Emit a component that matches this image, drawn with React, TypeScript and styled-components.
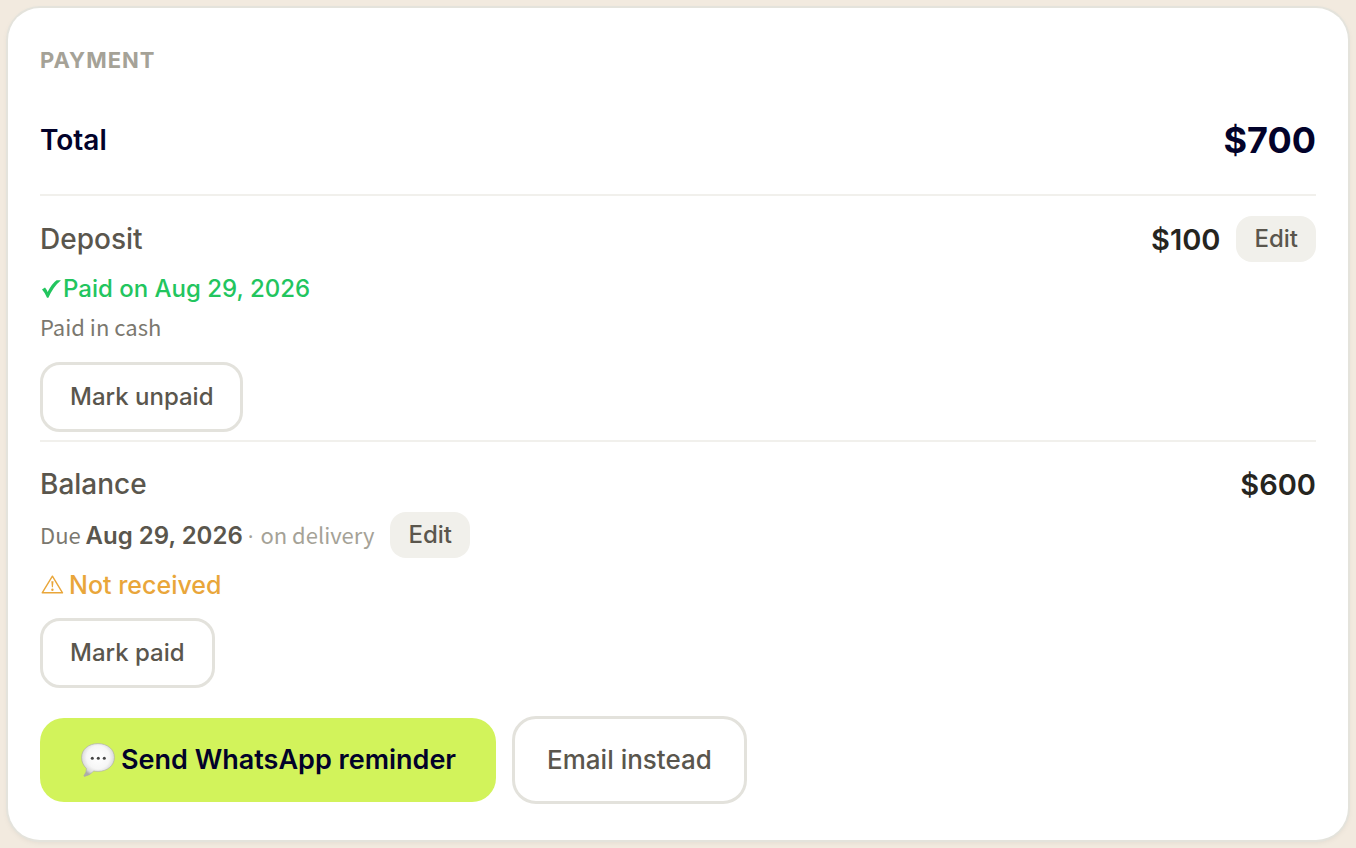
import React from "react";
import styled, { createGlobalStyle } from "styled-components";

const GlobalStyle = createGlobalStyle`
  *, *::before, *::after { box-sizing: border-box; }
  body {
    margin: 0;
    padding: 8px;
    background: #f2eadf;
    color: #5a564d;
    font-family: Inter, "Open Sans", sans-serif;
  }
  h2, p { margin: 0; }
`;

const Card = styled.section`
  padding: 32px 32px 36px;
  background: #fff;
  border-radius: 32px;
  box-shadow: 0 0 0 2px #e4e3dc, 0 2px 6px rgba(0, 0, 0, 0.08);
`;

const Heading = styled.h2`
  margin-bottom: 6px;
  font-size: 22px;
  line-height: 40px;
  font-weight: 700;
  letter-spacing: 1px;
  text-transform: uppercase;
  color: #a5a297;
`;

const Row = styled.div<{ $height: number }>`
  display: flex;
  align-items: center;
  justify-content: space-between;
  min-height: ${(p) => p.$height}px;
`;

const TotalLabel = styled.span`
  font-size: 28px;
  font-weight: 600;
  color: #02022a;
`;

const TotalAmount = styled.span`
  font-size: 36px;
  font-weight: 700;
  color: #02022a;
`;

const Section = styled.div`
  padding: 20px 0 8px;
  border-top: 2px solid #f1f0ec;
`;

const Label = styled.span`
  font-size: 28px;
  font-weight: 500;
`;

const Amount = styled.span`
  font-size: 29px;
  font-weight: 600;
  color: #26251f;
`;

const AmountGroup = styled.div`
  display: flex;
  align-items: center;
  gap: 16px;
`;

const EditButton = styled.button`
  height: 46px;
  padding: 0 18px;
  border: 0;
  border-radius: 16px;
  background: #f1f0eb;
  color: #5a564d;
  font: 500 24px/28px Inter, sans-serif;
  cursor: pointer;
`;

const Status = styled.p<{ $color: string; $gap: number; $size: number }>`
  display: flex;
  align-items: center;
  gap: ${(p) => p.$gap}px;
  margin-top: 8px;
  font-size: ${(p) => p.$size}px;
  line-height: 38px;
  font-weight: 500;
  color: ${(p) => p.$color};
`;

const Note = styled.p`
  margin-bottom: 18px;
  font: 400 22px/36px "Noto Sans CJK SC", sans-serif;
  color: #7b786f;
`;

const DueRow = styled.div`
  display: flex;
  align-items: center;
  gap: 16px;
  margin-top: 6px;
`;

const DueText = styled.p`
  font: 400 22px/36px "Noto Sans CJK SC", sans-serif;
  color: #7b786f;
`;

const DueDate = styled.strong`
  font-family: Inter, sans-serif;
  font-size: 24px;
  font-weight: 600;
  color: #5a564d;
`;

const DueWhen = styled.span`
  color: #a5a297;
`;

const Dot = styled.span`
  margin-right: 2px;
  font-family: "Open Sans", sans-serif;
`;

const OutlineButton = styled.button`
  display: block;
  height: 70px;
  margin-top: 14px;
  padding: 0 27px;
  border: 3px solid #e3e2dc;
  border-radius: 20px;
  background: #fff;
  color: #5a564d;
  font: 500 24px/32px Inter, sans-serif;
  cursor: pointer;
`;

const Actions = styled.div`
  display: flex;
  flex-wrap: wrap;
  align-items: center;
  gap: 16px;
  margin-top: 20px;
`;

const ReminderButton = styled.button`
  display: flex;
  align-items: center;
  gap: 5px;
  height: 84px;
  padding: 0 40px;
  border: 0;
  border-radius: 24px;
  background: #d2f35b;
  color: #02022a;
  font: 600 27px/36px Inter, sans-serif;
  cursor: pointer;
`;

const EmailButton = styled(OutlineButton)`
  height: 88px;
  margin-top: 0;
  padding: 0 32px;
  border-radius: 24px;
  font-size: 26px;
`;

const CheckIcon = () => (
  <svg width="22" height="22" viewBox="0 0 22 22" fill="currentColor" aria-hidden="true">
    <path d="M2 11.6 5 9.6Q6.6 11.5 7.6 14Q11.8 5.6 16.6 2.2H21Q13.2 8.6 8.4 19.8H7Q5.2 15 2 11.6Z" />
  </svg>
);

const WarningIcon = () => (
  <svg width="24" height="22" viewBox="0 0 24 22" fill="none" stroke="currentColor" aria-hidden="true">
    <path d="M12.4 2.2 22.5 18.8H2.2Z" strokeWidth="1.4" strokeLinejoin="round" />
    <path d="M11.3 7.2h2.2l-.6 6h-1Z" fill="currentColor" stroke="none" />
    <circle cx="12.4" cy="15.7" r="1.2" fill="currentColor" stroke="none" />
  </svg>
);

const SpeechIcon = () => (
  <svg width="36" height="36" viewBox="0 0 36 36" aria-hidden="true">
    <defs>
      <radialGradient id="bubble" cx="50%" cy="42%" r="58%">
        <stop offset="0" stopColor="#fff" />
        <stop offset="0.6" stopColor="#f6f6f6" />
        <stop offset="0.85" stopColor="#dadada" />
        <stop offset="1" stopColor="#acacac" />
      </radialGradient>
    </defs>
    <path
      d="M18 1.6C27.4 1.6 34.4 7.4 34.4 15.4S27.4 29.4 18 29.4Q15.6 29.4 13.8 29Q9.6 33.6 4.4 34.4Q3.4 34.2 4.2 33.2Q6.6 30.6 6.4 26.4Q1.6 22 1.6 15.4C1.6 7.4 8.6 1.6 18 1.6Z"
      fill="url(#bubble)"
      stroke="#a9aaa5"
      strokeWidth="0.6"
    />
    <g fill="#444">
      <circle cx="12.3" cy="16.2" r="1.5" />
      <circle cx="18.3" cy="16.2" r="1.5" />
      <circle cx="24.3" cy="16.2" r="1.5" />
    </g>
  </svg>
);

export default function App() {
  return (
    <>
      <GlobalStyle />
      <Card>
        <Heading>Payment</Heading>
        <Row $height={108}>
          <TotalLabel>Total</TotalLabel>
          <TotalAmount>$700</TotalAmount>
        </Row>
        <Section>
          <Row $height={46}>
            <Label>Deposit</Label>
            <AmountGroup>
              <Amount>$100</Amount>
              <EditButton type="button">Edit</EditButton>
            </AmountGroup>
          </Row>
          <Status $color="#22c55e" $gap={1} $size={24}>
            <CheckIcon />
            Paid on Aug 29, 2026
          </Status>
          <Note>Paid in cash</Note>
          <OutlineButton type="button">Mark unpaid</OutlineButton>
        </Section>
        <Section>
          <Row $height={44}>
            <Label>Balance</Label>
            <Amount>$600</Amount>
          </Row>
          <DueRow>
            <DueText>
              Due <DueDate>Aug 29, 2026</DueDate>{" "}
              <DueWhen>
                <Dot>·</Dot> on delivery
              </DueWhen>
            </DueText>
            <EditButton type="button">Edit</EditButton>
          </DueRow>
          <Status $color="#e9a63a" $gap={5} $size={25}>
            <WarningIcon />
            Not received
          </Status>
          <OutlineButton type="button">Mark paid</OutlineButton>
        </Section>
        <Actions>
          <ReminderButton type="button">
            <SpeechIcon />
            Send WhatsApp reminder
          </ReminderButton>
          <EmailButton type="button">Email instead</EmailButton>
        </Actions>
      </Card>
    </>
  );
}
